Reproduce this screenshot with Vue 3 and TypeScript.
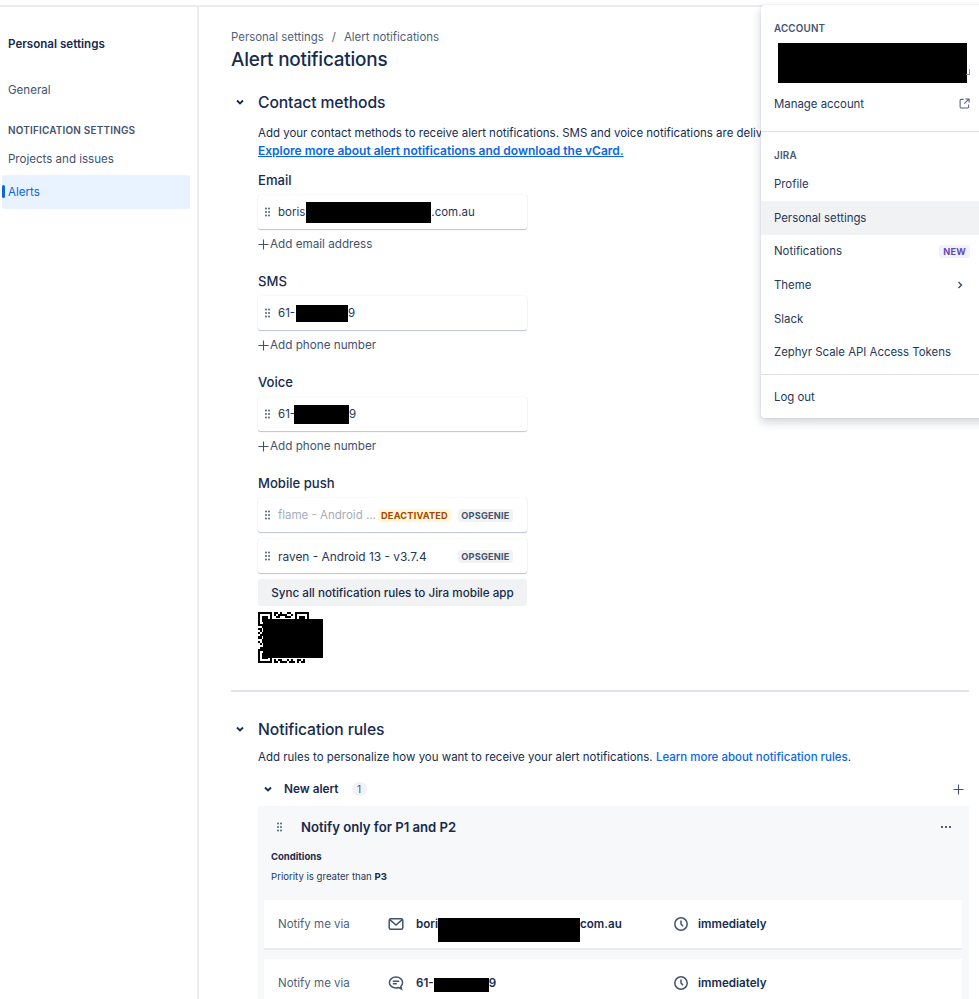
<template>
  <div class="page">
    <div class="topbar"></div>
    <div class="layout">
      <aside class="sidebar">
        <h2 class="side-title">Personal settings</h2>
        <a class="side-link general">General</a>
        <div class="side-group">NOTIFICATION SETTINGS</div>
        <a class="side-link projects">Projects and issues</a>
        <a class="side-link active">Alerts</a>
      </aside>

      <main class="content">
        <div class="crumbs"><span>Personal settings</span><span class="slash">/</span><span>Alert notifications</span></div>
        <h1 class="page-title">Alert notifications</h1>

        <section class="contact">
          <div class="section-head">
            <svg class="chev" viewBox="0 0 10 10"><path d="M2 3.500 5 6.500 8 3.500" /></svg>
            <h2>Contact methods</h2>
          </div>
          <div class="section-body">
            <p class="desc">Add your contact methods to receive alert notifications. SMS and voice notifications are delivered from the following numbers.</p>
            <a class="explore">Explore more about alert notifications and download the vCard.</a>

            <div v-for="group in contactGroups" :key="group.label" class="method">
              <h3>{{ group.label }}</h3>
              <div class="row">
                <svg class="grip" viewBox="0 0 8 10"><circle v-for="d in gripDots" :key="d.id" :cx="d.x" :cy="d.y" r="0.9" /></svg>
                <span>{{ group.before }}</span><i class="redact" :style="{ width: group.redact + 'px', height: group.tall + 'px', marginLeft: group.shift + 'px' }"></i><span>{{ group.after }}</span>
              </div>
              <div class="add">
                <svg class="plus" viewBox="0 0 12 12"><path d="M6 0.500v11M0.500 6h11" /></svg>
                <span>{{ group.add }}</span>
              </div>
            </div>

            <h3 class="push-title">Mobile push</h3>
            <div class="row push">
              <svg class="grip" viewBox="0 0 8 10"><circle v-for="d in gripDots" :key="d.id" :cx="d.x" :cy="d.y" r="0.9" /></svg>
              <span class="muted">flame - Android ...</span>
              <span class="lozenge warn">DEACTIVATED</span>
              <span class="lozenge grey">OPSGENIE</span>
            </div>
            <div class="row push second">
              <svg class="grip" viewBox="0 0 8 10"><circle v-for="d in gripDots" :key="d.id" :cx="d.x" :cy="d.y" r="0.9" /></svg>
              <span>raven - Android 13 - v3.7.4</span>
              <span class="lozenge grey">OPSGENIE</span>
            </div>
            <button class="sync">Sync all notification rules to Jira mobile app</button>
            <div class="qr">
              <svg viewBox="0 0 25 25" shape-rendering="crispEdges">
                <rect v-for="m in qrModules" :key="m.id" :x="m.x" :y="m.y" width="1" height="1" />
              </svg>
              <i class="qr-cover"></i>
            </div>
          </div>
        </section>

        <hr class="divider" />

        <section>
          <div class="section-head">
            <svg class="chev" viewBox="0 0 10 10"><path d="M2 3.500 5 6.500 8 3.500" /></svg>
            <h2>Notification rules</h2>
          </div>
          <div class="section-body">
            <p class="desc rules-desc">Add rules to personalize how you want to receive your alert notifications. <a>Learn more about notification rules</a>.</p>
            <div class="alert-head">
              <svg class="chev" viewBox="0 0 10 10"><path d="M2 3.500 5 6.500 8 3.500" /></svg>
              <strong>New alert</strong>
              <span class="count">1</span>
              <svg class="plus big" viewBox="0 0 12 12"><path d="M6 0.500v11M0.500 6h11" /></svg>
            </div>
            <div class="card">
              <div class="card-head">
                <svg class="grip" viewBox="0 0 8 10"><circle v-for="d in gripDots" :key="d.id" :cx="d.x" :cy="d.y" r="0.9" /></svg>
                <strong>Notify only for P1 and P2</strong>
                <span class="dots"><i></i><i></i><i></i></span>
              </div>
              <div class="cond-title">Conditions</div>
              <div class="cond">Priority is greater than <b>P3</b></div>

              <div class="notify">
                <span class="via">Notify me via</span>
                <svg class="ico" viewBox="0 0 16 16"><rect x="1.200" y="2.700" width="13.600" height="10.600" rx="1.500" /><path d="M1.800 3.600 8 9l6.200-5.400" /></svg>
                <b class="target">bori<i class="redact tall"></i>com.au</b>
                <svg class="ico clock" viewBox="0 0 16 16"><circle cx="8" cy="8" r="6.200" /><path d="M8 4.600V8l2 2.200" /></svg>
                <b>immediately</b>
              </div>
              <div class="notify">
                <span class="via">Notify me via</span>
                <svg class="ico" viewBox="0 0 16 16"><path d="M8 2C4.300 2 1.400 4.400 1.400 7.500S4.300 13 8 13c1 0 1.900-.2 2.700-.5l2.800 1.500-.6-2.700c1.100-1 1.700-2.300 1.700-3.800C14.600 4.400 11.700 2 8 2Z" /><path d="M4.800 6.300h6.400M4.800 8.800h4" /></svg>
                <b class="target">61-<i class="redact short"></i>9</b>
                <svg class="ico clock" viewBox="0 0 16 16"><circle cx="8" cy="8" r="6.200" /><path d="M8 4.600V8l2 2.200" /></svg>
                <b>immediately</b>
              </div>
            </div>
          </div>
        </section>
      </main>
    </div>

    <div class="menu">
      <div class="menu-label account">ACCOUNT</div>
      <div class="account-box"></div>
      <div class="menu-item manage">
        <span>Manage account</span>
        <svg class="ext" viewBox="0 0 12 12"><path d="M5 1.500H2.200a1 1 0 0 0-1 1v7.300a1 1 0 0 0 1 1h7.300a1 1 0 0 0 1-1V7M7 1h4v4M11 1 5.800 6.200" /></svg>
      </div>
      <div class="menu-sep first"></div>
      <div class="menu-label">JIRA</div>
      <div class="menu-item">Profile</div>
      <div class="menu-item hover">Personal settings</div>
      <div class="menu-item"><span>Notifications</span><span class="new">NEW</span></div>
      <div class="menu-item">
        <span>Theme</span>
        <svg class="theme-chev" viewBox="0 0 10 10"><path d="M3.500 2 6.500 5 3.500 8" /></svg>
      </div>
      <div class="menu-item">Slack</div>
      <div class="menu-item">Zephyr Scale API Access Tokens</div>
      <div class="menu-sep"></div>
      <div class="menu-item logout">Log out</div>
    </div>
  </div>
</template>

<script setup lang="ts">
interface ContactGroup {
  label: string;
  before: string;
  redact: number;
  tall: number;
  shift: number;
  after: string;
  add: string;
}

const contactGroups: ContactGroup[] = [
  { label: 'Email', before: 'boris', redact: 125, tall: 21, shift: 1, after: '.com.au', add: 'Add email address' },
  { label: 'SMS', before: '61-', redact: 52, tall: 17, shift: 1, after: '9', add: 'Add phone number' },
  { label: 'Voice', before: '61-', redact: 55, tall: 19, shift: -1, after: '9', add: 'Add phone number' },
];

const gripDots = [2, 5].flatMap((x) =>
  [1.5, 5, 8.5].map((y) => ({ id: `${x}-${y}`, x, y })),
);

// the visible edge of the code, most of it sits under the redaction
const qrRows = [
  '1111111011010011001111111',
  '1000001010111100101000001',
  '1011101001100111001011101',
  '1011101000000000001011101',
  '1011101000000000001000001',
  '1000001000000000000111111',
  '1111111000000000000000000',
  '0010000000000000000000000',
  '1101010000000000000000000',
  '0100110000000000000000000',
  '1011000000000000000000000',
  '0110100000000000000000000',
  '1100010000000000000000000',
  '0011100000000000000000000',
  '1010010000000000000000000',
  '0101100000000000000000000',
  '0000000000000000000000000',
  '0110010000000000000000000',
  '1111111000000000000000000',
  '1000001000000000000000000',
  '1011101000000000000000000',
  '1011101000000000000000000',
  '1011101000000000000000000',
  '1000001010110010100110100',
  '1111111011011101110101100',
];

const qrModules = qrRows.flatMap((row, y) =>
  [...row].flatMap((cell, x) => (cell === '1' ? [{ id: `${x}-${y}`, x, y }] : [])),
);
</script>

<style>
html,
body {
  margin: 0;
  background: #fff;
}
</style>

<style scoped>
* { box-sizing: border-box; }
.page {
  position: relative;
  height: 999px;
  overflow: hidden;
  font-family: Inter, "Liberation Sans", sans-serif;
  font-size: 11.5px;
  color: #253858;
  background: #fff;
}
.topbar { height: 7px; border-bottom: 2px solid #ebecf0; }
.layout { display: flex; height: 992px; }

.sidebar { width: 199px; flex: none; border-right: 2px solid #ebecf0; padding: 29px 7px 0 2px; }
.side-title { margin: 0 0 0 6px; font-size: 11.6px; line-height: 16px; font-weight: 600; color: #172b4d; }
.side-link { display: block; padding-left: 6px; font-size: 11.55px; line-height: 16px; color: #42526e; }
.general { margin-top: 30px; }
.side-group { margin: 25px 0 0 6px; font-size: 9.95px; line-height: 14px; font-weight: 600; color: #42526e; letter-spacing: 0.2px; }
.projects { margin-top: 14px; }
.active {
  position: relative;
  margin-top: 8px;
  height: 34px;
  line-height: 34px;
  border-radius: 3px;
  background: #e9f2ff;
  color: #0c66e4;
}
.active::before {
  content: "";
  position: absolute;
  left: 0;
  top: 10px;
  width: 3px;
  height: 13px;
  border-radius: 2px;
  background: #0c66e4;
}

.content { flex: 1; min-width: 0; padding: 22px 10px 0 32px; overflow: hidden; }
.crumbs { display: flex; gap: 8px; font-size: 11.45px; line-height: 16px; color: #505f79; }
.page-title { margin: 3px 0 0; font-size: 18.9px; line-height: 24px; font-weight: 500; color: #172b4d; letter-spacing: -0.2px; }

.section-head { display: flex; align-items: center; height: 24px; }
.section-head .chev { margin-left: 4px; }
.contact .section-head { margin-top: 18px; }
.section-head h2 { margin: 0 0 0 13px; font-size: 15.7px; font-weight: 500; color: #172b4d; letter-spacing: -0.1px; }
.chev { width: 10px; height: 10px; flex: none; fill: none; stroke: #172b4d; stroke-width: 1.8; }
.section-body { padding-left: 27px; }
.desc { margin: 11px 0 0; line-height: 17px; white-space: nowrap; color: #172b4d; font-size: 11.48px; }
.explore { display: block; line-height: 17px; font-weight: 600; color: #0c66e4; text-decoration: underline; font-size: 12px; }

.method { margin-top: 13px; height: 88px; }
.method h3, .push-title { margin: 0; font-size: 13.1px; line-height: 16px; font-weight: 500; color: #172b4d; }
.method h3 { height: 23px; }
.row {
  display: flex;
  align-items: center;
  width: 269px;
  height: 34px;
  padding: 0 6px;
  background: #fff;
  border-radius: 2px;
  box-shadow: 0 1px 1px rgba(9, 30, 66, 0.25), 0 0 1px rgba(9, 30, 66, 0.2);
  color: #253858;
}
.grip { width: 8px; height: 10px; flex: none; margin-right: 6px; fill: #42526e; }
.redact { display: inline-block; height: 20px; background: #000; }
.add { display: flex; align-items: center; gap: 1px; height: 30px; color: #42526e; font-size: 11.7px; }
.plus { width: 11px; height: 11px; flex: none; fill: none; stroke: #42526e; stroke-width: 1.2; }

.push-title { margin-top: 13px; height: 23px; }
.push { position: relative; font-size: 11.9px; }
.second { margin-top: 7px; }
.muted { color: #a5adba; font-size: 11.5px; }
.lozenge {
  position: absolute;
  top: 11px;
  height: 13px;
  border-radius: 3px;
  font-size: 9.2px;
  line-height: 13px;
  font-weight: 700;
  letter-spacing: 0.2px;
  text-align: center;
}
.warn { left: 120px; width: 73px; background: #fff7d6; color: #a54800; }
.grey { left: 200px; width: 55px; background: #f1f2f4; color: #44546f; }
.sync {
  display: block;
  width: 269px;
  height: 27px;
  margin-top: 6px;
  padding: 0;
  border: 0;
  border-radius: 3px;
  background: #f1f2f4;
  color: #172b4d;
  font: 500 11.66px Inter, "Liberation Sans", sans-serif;
}
.qr { position: relative; width: 65px; height: 51px; margin-top: 6px; }
.qr svg { display: block; width: 51px; height: 51px; fill: #000; }
.qr-cover { position: absolute; left: 5px; top: 7px; width: 60px; height: 39px; background: #000; }

.divider { margin: 27px 0 25px; border: 0; border-top: 2px solid #e1e3e8; }
.rules-desc { margin-top: 8px; }
.rules-desc a { color: #0c66e4; font-weight: 500; }
.alert-head { display: flex; align-items: center; height: 24px; margin-top: 11px; }
.alert-head .chev { margin-left: 5px; }
.alert-head strong { margin-left: 11px; font-weight: 600; color: #172b4d; font-size: 11.8px; }
.count {
  display: flex;
  align-items: center;
  justify-content: center;
  width: 15px;
  height: 14px;
  margin-left: 13px;
  border-radius: 8px;
  background: #f1f2f4;
  font-size: 10px;
  color: #44546f;
}
.big { margin-left: auto; margin-right: 5px; }
.card { margin-top: 5px; padding: 0 7px 20px 6px; background: #f7f8f9; }
.card-head { display: flex; align-items: center; height: 42px; padding: 0 11px 0 12px; }
.card-head .grip { margin-right: 17px; }
.card-head strong { font-size: 13.15px; font-weight: 600; color: #172b4d; }
.dots { display: flex; gap: 1.5px; margin-left: auto; }
.dots i { width: 2.5px; height: 2.5px; border-radius: 50%; background: #172b4d; }
.cond-title { margin: 2px 0 0 7px; font-size: 9.5px; line-height: 14px; font-weight: 700; color: #172b4d; }
.cond { margin: 6px 0 0 7px; font-size: 9.6px; line-height: 14px; color: #253858; }
.cond b { font-weight: 700; color: #172b4d; }

.notify {
  display: flex;
  align-items: center;
  height: 50px;
  margin-top: 9px;
  padding-left: 14px;
  background: #fff;
  border-bottom: 2px solid #ebecf0;
  color: #172b4d;
}
.cond + .notify { margin-top: 16px; }
.notify b { font-weight: 600; font-size: 11.6px; }
.via { width: 110px; color: #505f79; }
.ico { width: 16px; height: 16px; flex: none; margin-right: 12px; fill: none; stroke: #44546f; stroke-width: 1.5; }
.target { display: flex; align-items: center; width: 257px; }
.tall { width: 142px; height: 24px; margin-top: 11px; }
.short { width: 55px; height: 14px; margin-top: 3px; }
.clock { margin-right: 9px; }

.menu {
  position: absolute;
  left: 761px;
  top: 5px;
  width: 240px;
  height: 413px;
  padding-top: 17px;
  background: #fff;
  border-radius: 3px;
  box-shadow: 0 4px 10px rgba(9, 30, 66, 0.2), 0 0 1px rgba(9, 30, 66, 0.3);
}
.menu-label { height: 14px; padding-left: 13px; font-size: 9.8px; line-height: 14px; font-weight: 600; color: #44546f; letter-spacing: 0.2px; }
.menu-label + .menu-item { margin-top: 4.5px; }
.account-box { position: relative; width: 189px; height: 40px; margin: 7px 0 0 17px; background: #000; }
.account-box::after {
  content: "";
  position: absolute;
  right: -3px;
  bottom: 8px;
  width: 3px;
  height: 5px;
  border-right: 1px solid #8993a4;
  border-bottom: 1px solid #8993a4;
}
.menu-item {
  display: flex;
  align-items: center;
  justify-content: space-between;
  width: 218px;
  height: 33.7px;
  padding: 0 9px 0 13px;
  font-size: 11.4px;
  color: #253858;
}
.manage { margin-top: 4px; }
.ext { width: 11px; height: 11px; flex: none; fill: none; stroke: #505f79; stroke-width: 1.1; }
.menu-sep { width: 240px; height: 1px; margin-top: 5px; background: #dfe1e6; }
.menu-sep.first { margin-top: 10px; margin-bottom: 17px; }
.hover { background: #f1f2f4; }
.new { padding: 0 4px; height: 13px; border-radius: 3px; background: #f3f0ff; color: #5e4db2; font-size: 9.2px; line-height: 13px; font-weight: 700; letter-spacing: 0.2px; }
.theme-chev { width: 10px; height: 10px; margin-right: 5px; fill: none; stroke: #44546f; stroke-width: 1.5; }
.logout { margin-top: 5px; }
</style>
